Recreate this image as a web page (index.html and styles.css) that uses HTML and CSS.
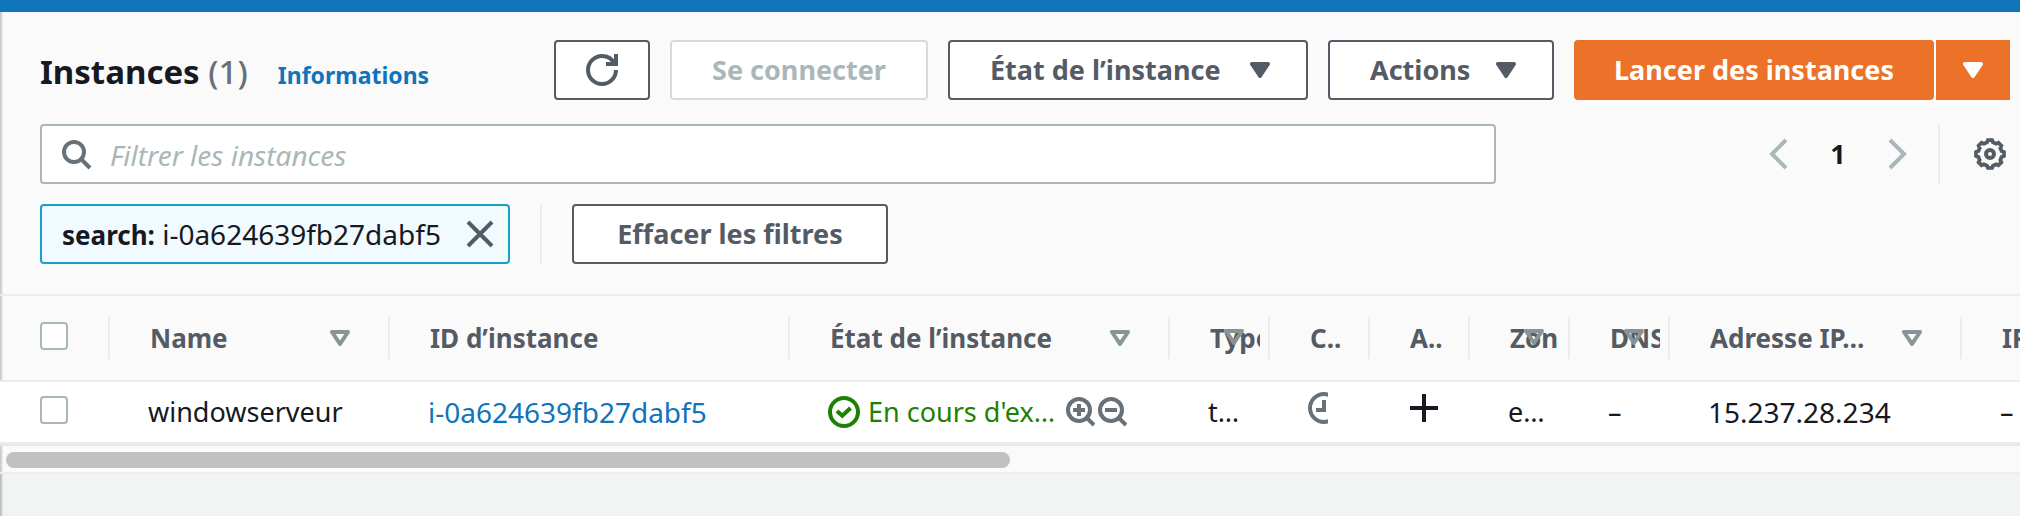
FILE: index.html
```html
<!DOCTYPE html>
<html lang="fr">
<head>
<meta charset="utf-8">
<title>Instances</title>
<link rel="stylesheet" href="styles.css">
</head>
<body>
<svg width="0" height="0" class="sprite" aria-hidden="true">
  <symbol id="caret" viewBox="0 0 20 16"><path d="M2 2H18L10 14Z" fill="currentColor" stroke="currentColor" stroke-width="4" stroke-linejoin="round"/></symbol>
  <symbol id="sort" viewBox="0 0 20 16"><path d="M2 2H18L10 14Z" fill="none" stroke="currentColor" stroke-width="4" stroke-linejoin="round"/></symbol>
</svg>
<div class="topbar"></div>
<main class="panel">
  <header class="heading">
    <div class="title">
      <h1>Instances <span class="count">(1)</span></h1>
      <a href="#" class="info">Informations</a>
    </div>
    <div class="actions">
      <button class="btn btn-refresh" aria-label="Actualiser"><svg class="icon" viewBox="0 0 16 16" fill="none" stroke="currentColor" stroke-width="2"><path d="M15 8a7 7 0 1 1-7-7c2.8 0 5.2 1.6 6.3 4"/><path d="M10 5h5V0"/></svg></button>
      <button class="btn btn-connect" disabled>Se connecter</button>
      <button class="btn menu btn-state">État de l’instance <svg class="caret"><use href="#caret"/></svg></button>
      <button class="btn menu btn-actions">Actions <svg class="caret"><use href="#caret"/></svg></button>
      <div class="split">
        <button class="btn primary btn-launch">Lancer des instances</button>
        <button class="btn primary btn-more" aria-label="Autres options"><svg class="caret"><use href="#caret"/></svg></button>
      </div>
    </div>
  </header>

  <div class="toolbar">
    <label class="search">
      <svg class="icon" viewBox="0 0 32 32" fill="none" stroke="currentColor" stroke-width="4"><circle cx="14" cy="14" r="10"/><path d="M20 20L30 30"/></svg>
      <input type="text" placeholder="Filtrer les instances" aria-label="Filtrer les instances">
    </label>
    <div class="pager">
      <button class="plain page-nav" aria-label="Page précédente"><svg class="chevron" viewBox="0 0 20 32"><path d="M18 2L4 16L18 30"/></svg></button>
      <button class="plain page-number">1</button>
      <button class="plain page-nav" aria-label="Page suivante"><svg class="chevron" viewBox="0 0 20 32"><path d="M2 2L16 16L2 30"/></svg></button>
      <span class="divider"></span>
      <button class="plain settings" aria-label="Préférences"><svg class="icon" viewBox="0 0 16 16" fill="none" stroke="currentColor" stroke-width="1.9"><path d="M6.96 1.03L9.04 1.03 9.5 2.19 11.05 2.83 12.19 2.33 13.67 3.81 13.17 4.95 13.81 6.5 14.97 6.96 14.97 9.04 13.81 9.5 13.17 11.05 13.67 12.19 12.19 13.67 11.05 13.17 9.5 13.81 9.04 14.97 6.96 14.97 6.5 13.81 4.95 13.17 3.81 13.67 2.33 12.19 2.83 11.05 2.19 9.5 1.03 9.04 1.03 6.96 2.19 6.5 2.83 4.95 2.33 3.81 3.81 2.33 4.95 2.83 6.5 2.19Z"/><circle cx="8" cy="8" r="2" stroke-width="2"/></svg></button>
    </div>
  </div>

  <div class="filters">
    <div class="chip">
      <span><b>search:</b> i-0a624639fb27dabf5</span>
      <button class="plain" aria-label="Supprimer le filtre"><svg class="icon" viewBox="0 0 32 32" fill="none" stroke="currentColor" stroke-width="4"><path d="M4 4L28 28M28 4L4 28"/></svg></button>
    </div>
    <span class="divider"></span>
    <button class="btn btn-clear">Effacer les filtres</button>
  </div>

  <div class="table-wrap">
    <table>
      <colgroup><col class="c-check"><col class="c-name"><col class="c-id"><col class="c-state"><col class="c-small"><col class="c-small"><col class="c-small"><col class="c-small"><col class="c-small"><col class="c-ip"><col class="c-last"></colgroup>
      <thead>
        <tr>
          <th><div class="head check"><input type="checkbox" aria-label="Tout sélectionner"></div></th>
          <th><div class="head"><span>Name</span><svg class="sort"><use href="#sort"/></svg></div></th>
          <th><div class="head"><span>ID d’instance</span></div></th>
          <th><div class="head"><span>État de l’instance</span><svg class="sort"><use href="#sort"/></svg></div></th>
          <th><div class="head narrow"><span>Type</span><svg class="sort"><use href="#sort"/></svg></div></th>
          <th><div class="head narrow"><span>C..</span></div></th>
          <th><div class="head narrow"><span>A..</span></div></th>
          <th><div class="head narrow"><span>Zon</span><svg class="sort"><use href="#sort"/></svg></div></th>
          <th><div class="head narrow"><span>DNS</span><svg class="sort"><use href="#sort"/></svg></div></th>
          <th><div class="head"><span>Adresse IP…</span><svg class="sort"><use href="#sort"/></svg></div></th>
          <th><div class="head"><span>IP</span></div></th>
        </tr>
      </thead>
      <tbody>
        <tr>
          <td><div class="cell check"><input type="checkbox" aria-label="Sélectionner windowserveur"></div></td>
          <td><div class="cell">windowserveur</div></td>
          <td><div class="cell"><a href="#">i-0a624639fb27dabf5</a></div></td>
          <td><div class="cell state">
            <svg class="icon ok" viewBox="0 0 32 32" fill="none" stroke="currentColor" stroke-width="4"><circle cx="16" cy="16" r="14"/><path d="M9 15L14.300 19.800L22.500 12"/></svg>
            <span class="ok">En cours d'ex…</span>
            <span class="lens">
              <button class="plain" aria-label="Inclure dans le filtre"><svg class="icon" viewBox="0 0 32 32" fill="none" stroke="currentColor" stroke-width="4"><circle cx="16" cy="14" r="11"/><path d="M24 22L31 29M10 14H22M16 8V20"/></svg></button>
              <button class="plain" aria-label="Exclure du filtre"><svg class="icon" viewBox="0 0 32 32" fill="none" stroke="currentColor" stroke-width="4"><circle cx="16" cy="14" r="11"/><path d="M24 22L31 29M10 14H22"/></svg></button>
            </span>
          </div></td>
          <td><div class="cell">t…</div></td>
          <td><div class="cell glyph"><svg class="half" viewBox="0 0 20 32" fill="none" stroke="#687078" stroke-width="4"><circle cx="16" cy="16" r="14"/><path d="M16 8V18H8"/></svg></div></td>
          <td><div class="cell glyph"><svg class="icon" viewBox="0 0 32 32" fill="none" stroke="currentColor" stroke-width="4"><path d="M2 16H30M16 2V30"/></svg></div></td>
          <td><div class="cell">e…</div></td>
          <td><div class="cell">–</div></td>
          <td><div class="cell address">15.237.28.234</div></td>
          <td><div class="cell">–</div></td>
        </tr>
      </tbody>
    </table>
  </div>
  <div class="scroll-track"><div class="scroll-thumb"></div></div>
</main>
</body>
</html>
```
FILE: styles.css
```css
* { box-sizing: border-box; }

body {
  margin: 0;
  min-height: 100vh;
  overflow: hidden;
  background: #f2f4f4;
  color: #16191f;
  font-family: "Noto Sans", sans-serif;
  font-size: 27px;
  line-height: 40px;
  box-shadow: inset 3px 0 2px -1px #b6bec3;
}

button, input { font: inherit; }
a { color: #0f74ba; text-decoration: none; }
svg { display: block; flex: none; }
.sprite { position: absolute; }
.icon { width: 32px; height: 32px; }
.caret, .sort { width: 20px; height: 16px; overflow: visible; }

.topbar { height: 12px; background: #0f74ba; }
.panel { background: #fafafa; box-shadow: inset 3px 0 2px -1px #c5ccd0; }

.heading {
  display: flex;
  align-items: center;
  justify-content: space-between;
  padding: 28px 10px 24px 40px;
}
.title { display: flex; align-items: baseline; gap: 30px; padding-top: 4px; white-space: nowrap; }
h1 { margin: 0; font-size: 33px; line-height: 44px; }
.count { color: #687078; font-weight: 500; }
.info { font-size: 23px; font-weight: 700; }

.actions { display: flex; gap: 20px; }
.btn {
  display: flex;
  align-items: center;
  justify-content: center;
  height: 60px;
  padding: 0;
  border: 2px solid #545b64;
  border-radius: 4px;
  background: #fff;
  color: #545b64;
  font-weight: 700;
  white-space: nowrap;
}
.btn:disabled { border-color: #d5dbdb; color: #aab7b8; }
.menu { justify-content: space-between; padding: 0 36px 0 40px; }
.btn-refresh { width: 96px; }
.btn-connect { width: 258px; }
.btn-state { width: 360px; }
.btn-actions { width: 226px; }
.btn-clear { width: 316px; }
.split { display: flex; gap: 2px; background: #fff; }
.primary { border-color: #eb7228; background: #eb7228; color: #fff; }
.btn-launch { width: 360px; }
.btn-more { width: 74px; border-radius: 0; }

.toolbar {
  display: flex;
  align-items: center;
  justify-content: space-between;
  padding: 0 10px 0 40px;
}
.search {
  display: flex;
  align-items: center;
  flex: 0 0 calc(74% - 2px);
  gap: 18px;
  height: 60px;
  padding: 0 18px;
  border: 2px solid #aab7b8;
  border-radius: 4px;
  background: #fff;
  color: #687078;
}
.search input { flex: 1; min-width: 0; padding: 2px 0 0; border: 0; outline: 0; background: none; font-size: 28px; }
.search input::placeholder { color: #aab7b8; font-style: italic; opacity: 1; }

.plain { display: flex; padding: 0; border: 0; background: none; color: inherit; }
.pager { display: flex; align-items: center; }
.page-nav { color: #aab7b8; }
.chevron { width: 20px; height: 32px; fill: none; stroke: currentColor; stroke-width: 4; }
.page-number { justify-content: center; width: 100px; font-weight: 700; }
.divider { width: 2px; height: 60px; background: #eaeded; }
.pager .divider { margin: 0 34px 0 30px; }
.settings { margin-right: 4px; color: #545b64; }

.filters { display: flex; align-items: center; gap: 30px; padding: 20px 10px 30px 40px; }
.chip {
  display: flex;
  align-items: center;
  justify-content: space-between;
  width: 470px;
  height: 60px;
  padding: 0 12px 0 20px;
  border: 2px solid #16a2c7;
  border-radius: 4px;
  background: #f1faff;
  font-size: 28px;
  white-space: nowrap;
}
.chip b { font-size: 26px; }
.chip .plain { color: #545b64; }

.table-wrap { overflow: hidden; border-top: 2px solid #eaeded; }
table { width: 2240px; table-layout: fixed; border-collapse: separate; border-spacing: 0; white-space: nowrap; }
th, td { padding: 0; border-bottom: 2px solid #eaeded; text-align: left; vertical-align: middle; }
th { height: 86px; color: #545b64; font-size: 26px; }
td { height: 62px; background: #fff; }
.c-check { width: 110px; }
.c-name { width: 280px; }
.c-id { width: 400px; }
.c-state { width: 380px; }
.c-small { width: 100px; }
.c-ip { width: 292px; }

.head {
  position: relative;
  display: flex;
  align-items: center;
  justify-content: space-between;
  height: 42px;
  padding: 0 38px 0 40px;
  border-right: 2px solid #eaeded;
}
.head span { overflow: hidden; }
.head.narrow { padding-right: 8px; }
.sort { color: #879596; }
.narrow .sort { position: absolute; top: 12px; right: 24px; }
.cell { display: flex; align-items: center; padding-left: 38px; }
.check { padding-bottom: 4px; padding-left: 40px; }
.glyph { padding-bottom: 8px; }
td a, .address { font-size: 28px; }
input[type="checkbox"] {
  appearance: none;
  width: 28px;
  height: 28px;
  margin: 0;
  border: 2px solid #aab7b8;
  border-radius: 4px;
  background: #fff;
}
.ok { color: #1d8102; }
.state { gap: 8px; }
.lens { display: flex; color: #687078; }
.half { width: 20px; height: 32px; }

.scroll-track {
  padding: 6px;
  height: 30px;
  border-top: 2px solid #e7e7e7;
  border-bottom: 2px solid #ededed;
}
.scroll-thumb { width: 50%; height: 16px; border-radius: 8px; background: #c1c1c1; }
```
